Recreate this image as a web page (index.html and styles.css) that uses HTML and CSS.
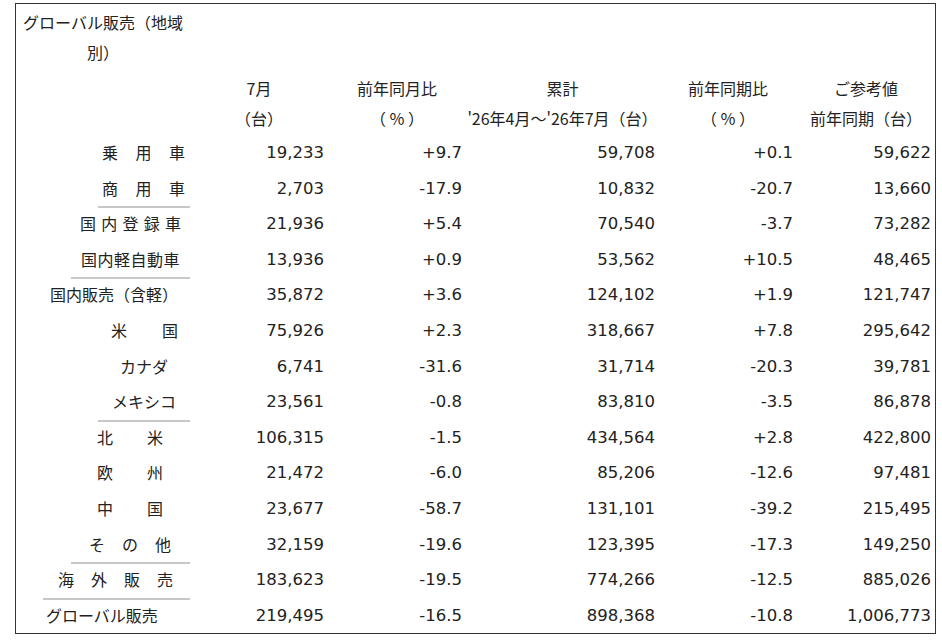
FILE: index.html
```html
<!DOCTYPE html>
<html lang="ja">
<head>
<meta charset="utf-8">
<title>グローバル販売（地域別）</title>
<link rel="stylesheet" href="styles.css">
</head>
<body>
<div class="sheet">
  <div class="title">グローバル販売（地域<br>別）</div>
  <div class="row head">
    <div class="label"></div>
    <div class="h">7月<br>（台）</div>
    <div class="h">前年同月比<br><span class="pct">（％）</span></div>
    <div class="h">累計<br>'26年4月～'26年7月（台）</div>
    <div class="h">前年同期比<br><span class="pct">（％）</span></div>
    <div class="h">ご参考値<br>前年同期（台）</div>
  </div>

  <div class="row"><div class="label l-jyo">乗用車</div><div class="num">19,233</div><div class="num">+9.7</div><div class="num">59,708</div><div class="num">+0.1</div><div class="num">59,622</div></div>
  <div class="row"><div class="label sep-a l-sho">商用車</div><div class="num">2,703</div><div class="num">-17.9</div><div class="num">10,832</div><div class="num">-20.7</div><div class="num">13,660</div></div>
  <div class="row"><div class="label l-toroku">国内登録車</div><div class="num">21,936</div><div class="num">+5.4</div><div class="num">70,540</div><div class="num">-3.7</div><div class="num">73,282</div></div>
  <div class="row"><div class="label sep-b l-kei">国内軽自動車</div><div class="num">13,936</div><div class="num">+0.9</div><div class="num">53,562</div><div class="num">+10.5</div><div class="num">48,465</div></div>
  <div class="row"><div class="label l-kokunai">国内販売（含軽）</div><div class="num">35,872</div><div class="num">+3.6</div><div class="num">124,102</div><div class="num">+1.9</div><div class="num">121,747</div></div>
  <div class="row"><div class="label l-usa">米国</div><div class="num">75,926</div><div class="num">+2.3</div><div class="num">318,667</div><div class="num">+7.8</div><div class="num">295,642</div></div>
  <div class="row"><div class="label l-canada">カナダ</div><div class="num">6,741</div><div class="num">-31.6</div><div class="num">31,714</div><div class="num">-20.3</div><div class="num">39,781</div></div>
  <div class="row"><div class="label sep-a l-mexico">メキシコ</div><div class="num">23,561</div><div class="num">-0.8</div><div class="num">83,810</div><div class="num">-3.5</div><div class="num">86,878</div></div>
  <div class="row"><div class="label l-two">北米</div><div class="num">106,315</div><div class="num">-1.5</div><div class="num">434,564</div><div class="num">+2.8</div><div class="num">422,800</div></div>
  <div class="row"><div class="label l-two">欧州</div><div class="num">21,472</div><div class="num">-6.0</div><div class="num">85,206</div><div class="num">-12.6</div><div class="num">97,481</div></div>
  <div class="row"><div class="label l-two">中国</div><div class="num">23,677</div><div class="num">-58.7</div><div class="num">131,101</div><div class="num">-39.2</div><div class="num">215,495</div></div>
  <div class="row"><div class="label sep-b l-other">その他</div><div class="num">32,159</div><div class="num">-19.6</div><div class="num">123,395</div><div class="num">-17.3</div><div class="num">149,250</div></div>
  <div class="row"><div class="label sep-c l-kaigai">海外販売</div><div class="num">183,623</div><div class="num">-19.5</div><div class="num">774,266</div><div class="num">-12.5</div><div class="num">885,026</div></div>
  <div class="row"><div class="label l-global">グローバル販売</div><div class="num">219,495</div><div class="num">-16.5</div><div class="num">898,368</div><div class="num">-10.8</div><div class="num">1,006,773</div></div>
</div>
</body>
</html>
```

FILE: styles.css
```css
html, body {
  margin: 0;
  padding: 0;
  background: #ffffff;
}

body {
  font-family: "Noto Sans CJK JP", "Noto Sans", sans-serif;
  font-size: 16px;
  color: #222222;
  text-spacing-trim: space-all;
}

.sheet {
  box-sizing: border-box;
  width: 921px;
  margin: 3px 0 0 15px;
  border: 1px solid #333333;
}

.title {
  width: 174px;
  padding-top: 3px;
  line-height: 30px;
  text-align: center;
  white-space: nowrap;
}

.row {
  display: grid;
  grid-template-columns: 174px 138px 138px 193px 138px 138px;
  height: 35.6px;
}

.row.head {
  height: 60px;
  margin-top: 6px;
  margin-bottom: 2px;
}

.h {
  line-height: 30px;
  text-align: center;
  white-space: nowrap;
}

.pct {
  letter-spacing: 3px;
  margin-right: -3px;
}

.label {
  box-sizing: border-box;
  line-height: 35.6px;
  white-space: nowrap;
  text-align: left;
}

.num {
  font-family: "DejaVu Sans", sans-serif;
  font-size: 16.5px;
  line-height: 35.6px;
  text-align: right;
  padding-right: 4px;
  white-space: nowrap;
}

/* separator rules under group rows */
.sep-a,
.sep-b,
.sep-c {
  border-bottom: 2px solid #c8c8c8;
}
.sep-a { margin-left: 82px; }
.sep-b { margin-left: 55px; }
.sep-c { margin-left: 27px; }

/* label placement */
.l-jyo { padding-left: 86px; letter-spacing: 17.5px; }
.l-sho { padding-left: 4px; letter-spacing: 17.5px; }
.l-toroku { padding-left: 64px; letter-spacing: 5.25px; }
.l-kei { padding-left: 10px; letter-spacing: 0.5px; }
.l-kokunai { padding-left: 34px; }
.l-usa { padding-left: 95px; letter-spacing: 35px; }
.l-canada { padding-left: 104px; }
.l-mexico { padding-left: 14px; }
.l-two { padding-left: 81px; letter-spacing: 34px; }
.l-other { padding-left: 18px; letter-spacing: 17px; }
.l-kaigai { padding-left: 15px; letter-spacing: 17px; }
.l-global { padding-left: 30px; }
```
